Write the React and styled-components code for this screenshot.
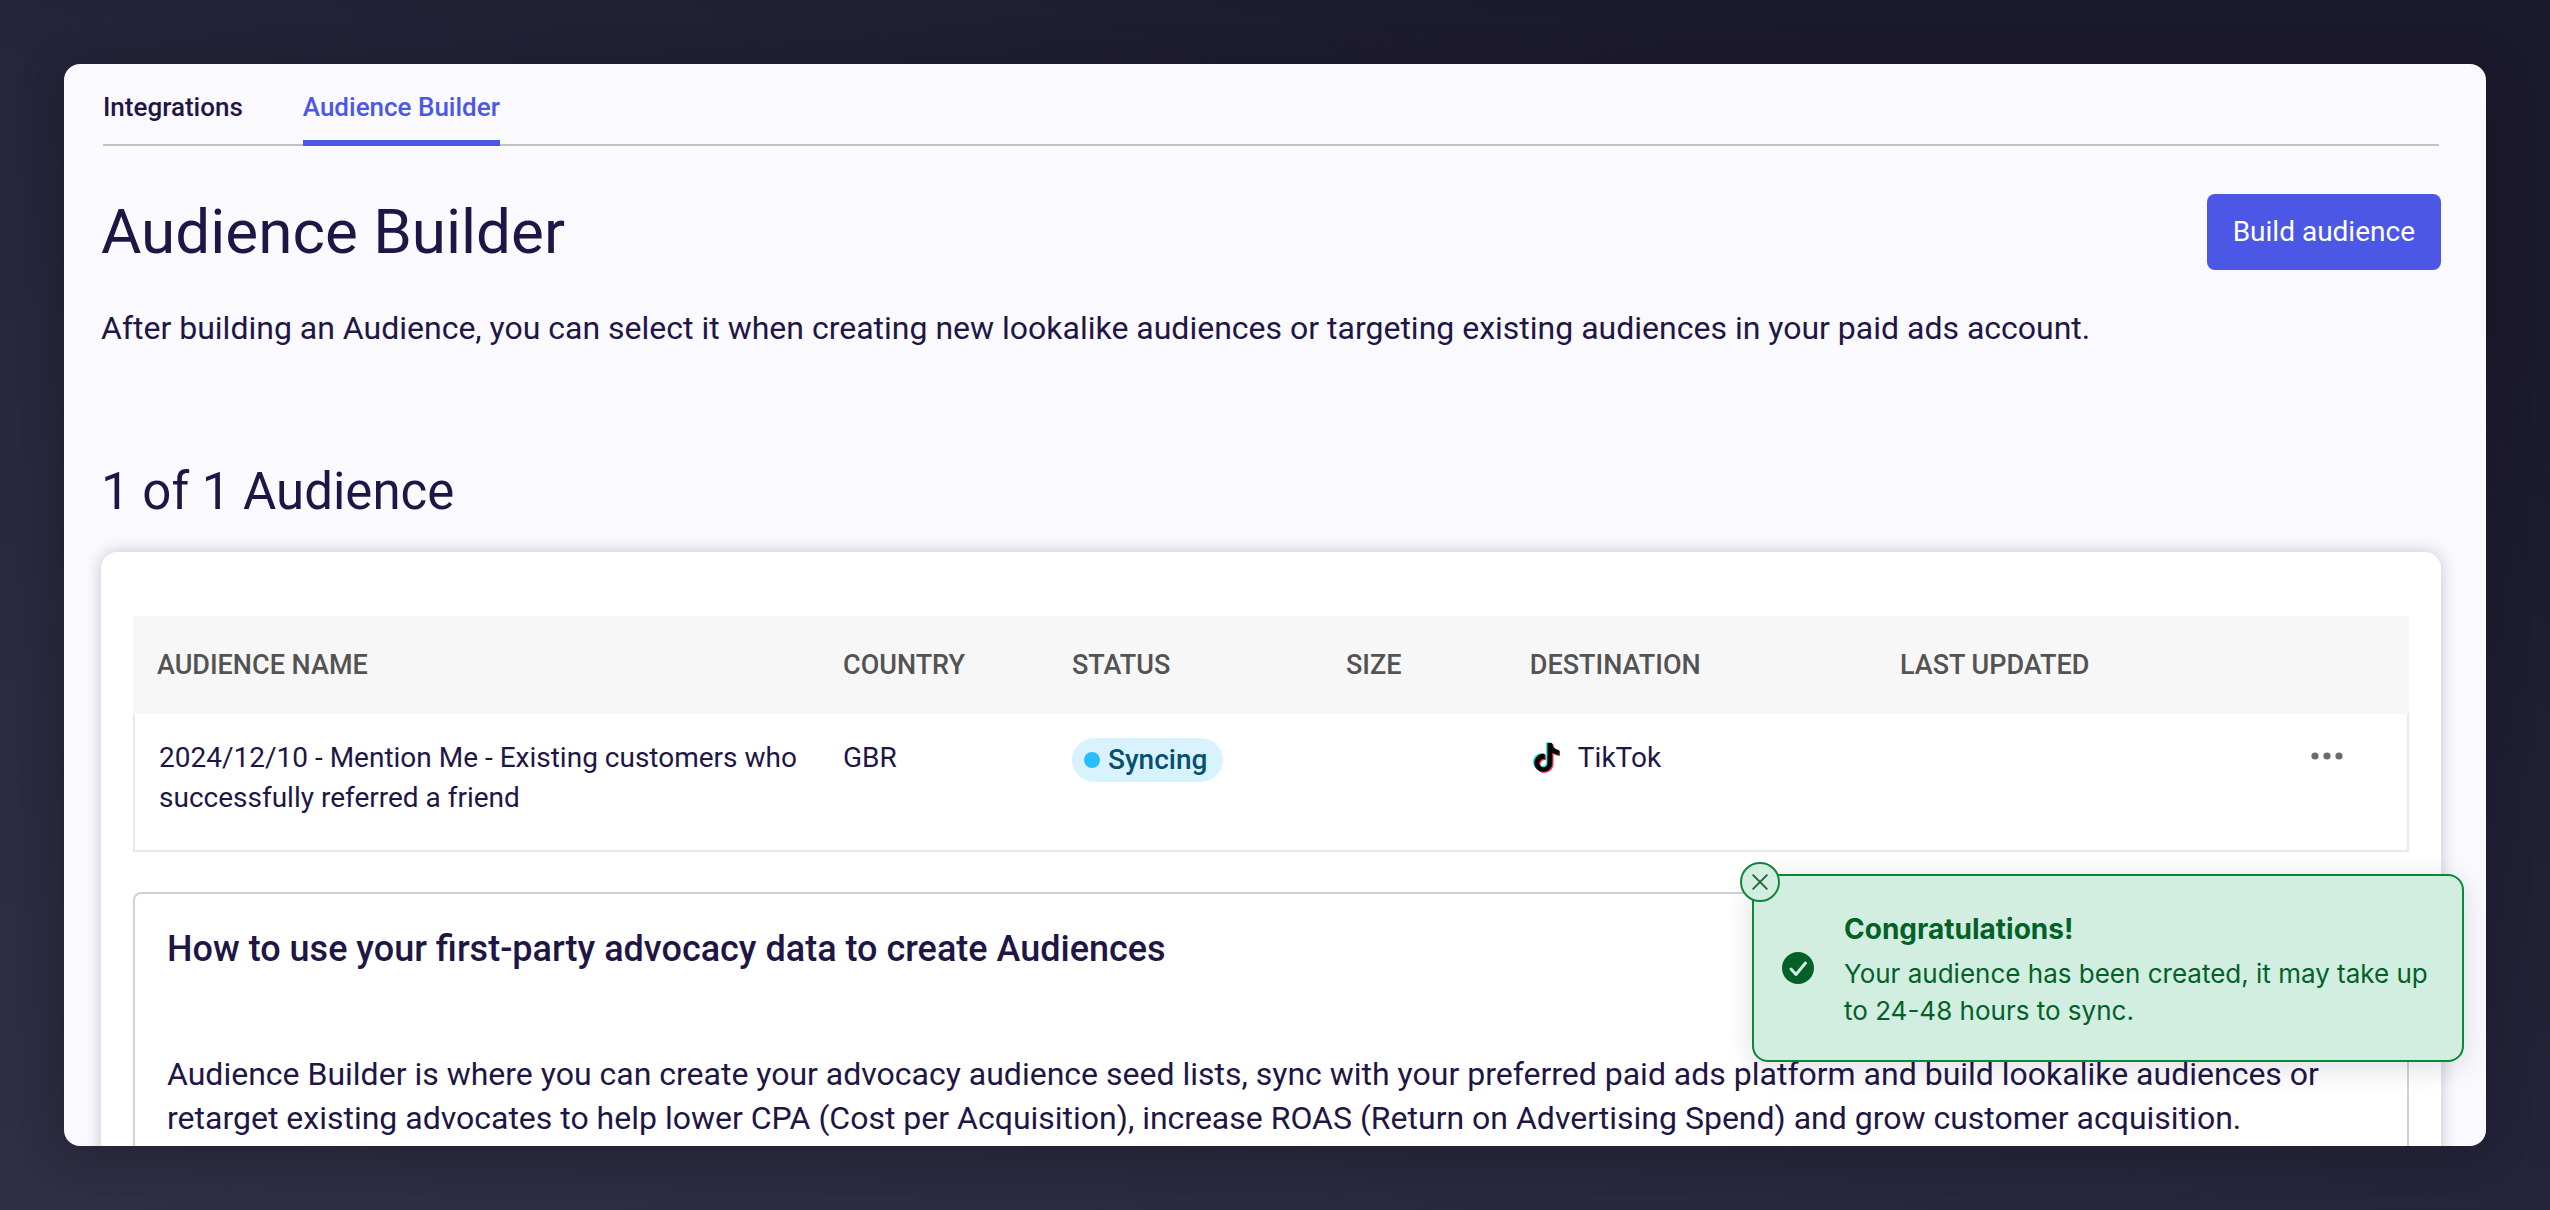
import React, { useState } from "react";
import styled, { createGlobalStyle } from "styled-components";

const GlobalStyle = createGlobalStyle`
  *, *::before, *::after { box-sizing: border-box; }
  body {
    margin: 0;
    font-family: Roboto, "Liberation Sans", sans-serif;
    color: #1f1646;
  }
  h1, h2, h3, p { margin: 0; font-weight: 400; }
  button { font: inherit; cursor: pointer; }
`;

const Stage = styled.div`
  display: flex;
  height: 100vh;
  padding: 64px;
  background: linear-gradient(25deg, #2e2e44 0%, #24243a 50%, #1b192c 85%);
`;

const Panel = styled.main`
  position: relative;
  flex: 1;
  overflow: hidden;
  padding: 0 45px 0 37px;
  border-radius: 16px;
  background: #f9f9fe;
  box-shadow: 0 4px 40px rgba(24, 18, 30, 0.45);
`;

const Tabs = styled.nav`
  display: flex;
  gap: 60px;
  margin: 0 2px;
  border-bottom: 2px solid #c2c2c4;
`;

const Tab = styled.a`
  margin-bottom: -2px;
  padding: 24px 0 14px;
  border-bottom: 6px solid ${(p) => (p.$active ? "#4c57e8" : "transparent")};
  color: ${(p) => (p.$active ? "#4c57e8" : "#1f1646")};
  font-size: 26px;
  font-weight: 500;
  line-height: 38px;
  text-decoration: none;
`;

const Header = styled.header`
  display: flex;
  align-items: center;
  justify-content: space-between;
  margin-top: 48px;
`;

const Title = styled.h1`
  font-size: 62px;
  line-height: 76px;
`;

const PrimaryButton = styled.button`
  padding: 0 26px;
  border: 0;
  border-radius: 8px;
  background: #4c57e5;
  color: #fff;
  font-size: 28px;
  line-height: 76px;
`;

const Lead = styled.p`
  margin-top: 36px;
  font-size: 32px;
  line-height: 44px;
`;

const CountTitle = styled.h2`
  margin-top: 112px;
  font-size: 51px;
  line-height: 60px;
`;

const Card = styled.section`
  margin-top: 30px;
  padding: 64px 32px 48px;
  border-radius: 16px;
  background: #fff;
  box-shadow: 0 0 16px rgba(30, 30, 50, 0.24);
`;

const Table = styled.table`
  width: 100%;
  border-collapse: separate;
  border-spacing: 0;
  table-layout: fixed;
  text-align: left;
`;

const Col = styled.col`
  width: ${(p) => p.$share}%;
`;

const HeadCell = styled.th`
  height: 98px;
  padding: 0 0 0 24px;
  background: #f7f7f7;
  color: #535353;
  font-size: 27px;
  font-weight: 500;
  line-height: 40px;
  text-transform: uppercase;
`;

const Cell = styled.td`
  height: 138px;
  padding: 24px 0 32px 24px;
  border-bottom: 2px solid #e9e9ea;
  font-size: 28px;
  line-height: 40px;
  vertical-align: top;

  &:first-child { border-left: 2px solid #e9e9ea; }
  &:last-child { border-right: 2px solid #e9e9ea; }
`;

const Status = styled.span`
  display: inline-flex;
  align-items: center;
  gap: 8px;
  height: 44px;
  padding: 0 16px 0 12px;
  border-radius: 22px;
  background: #d9f3fe;
  color: #07506f;
  font-weight: 500;

  &::before {
    content: "";
    width: 16px;
    height: 16px;
    border-radius: 50%;
    background: #29bdfd;
  }
`;

const Destination = styled.span`
  display: flex;
  align-items: center;
  gap: 18px;

  svg { width: 30px; height: 34px; }
`;

const MenuButton = styled.button`
  display: block;
  margin-left: auto;
  margin-right: 64px;
  padding: 0;
  border: 0;
  background: none;
  line-height: 0;

  svg { width: 32px; height: 36px; fill: #6b6b6b; }
`;

const Guide = styled.section`
  margin-top: 40px;
  padding: 31px 32px 48px;
  border: 2px solid #d0cfdb;
  border-radius: 8px;
`;

const GuideTitle = styled.h3`
  font-size: 36px;
  font-weight: 500;
  line-height: 48px;
`;

const GuideText = styled.p`
  margin-top: 79px;
  font-size: 32px;
  line-height: 44px;
`;

const Toast = styled.aside`
  position: absolute;
  right: 22px;
  bottom: 84px;
  display: flex;
  align-items: center;
  gap: 30px;
  width: 712px;
  padding: 31px 28px;
  border: 2px solid #078a38;
  border-radius: 16px;
  background: #d1eee0;
  color: #036128;
  box-shadow: 0 6px 28px rgba(20, 20, 50, 0.14);
  font-family: Inter, "Liberation Sans", sans-serif;
`;

const ToastIcon = styled.svg`
  flex: none;
  width: 32px;
  height: 32px;
`;

const ToastTitle = styled.h2`
  margin-bottom: 4px;
  font-size: 28px;
  font-weight: 700;
  line-height: 44px;
`;

const ToastText = styled.p`
  font-size: 26px;
  line-height: 37px;
`;

const CloseButton = styled.button`
  position: absolute;
  top: -14px;
  left: -14px;
  display: grid;
  place-items: center;
  width: 40px;
  height: 40px;
  padding: 0;
  border: 2px solid #14853d;
  border-radius: 50%;
  background: #d1eee0;

  svg { width: 16px; height: 16px; stroke: #1d6338; stroke-width: 1.6; stroke-linecap: round; }
`;

const NOTE =
  "M12.525.02c1.31-.02 2.61-.01 3.91-.02.08 1.53.63 3.09 1.75 4.17 1.12 1.11 2.7 1.62 4.24 1.79v4.03c-1.44-.05-2.89-.35-4.2-.97-.57-.26-1.1-.59-1.62-.93-.01 2.92.01 5.84-.02 8.75-.08 1.4-.54 2.79-1.35 3.94-1.31 1.92-3.58 3.17-5.91 3.21-1.43.08-2.86-.31-4.08-1.03-2.02-1.19-3.44-3.37-3.65-5.71-.02-.5-.03-1-.01-1.49.18-1.9 1.12-3.72 2.58-4.96 1.66-1.44 3.98-2.13 6.15-1.72.02 1.48-.04 2.96-.04 4.44-.99-.32-2.15-.23-3.02.37-.63.41-1.11 1.04-1.36 1.75-.21.51-.15 1.07-.14 1.61.24 1.64 1.82 3.02 3.5 2.87 1.12-.01 2.19-.66 2.77-1.61.19-.33.4-.67.41-1.06.1-1.79.06-3.57.07-5.36.01-4.03-.01-8.05.02-12.07z";

function TikTokLogo() {
  return (
    <svg viewBox="-2 -1 25 27" aria-hidden="true">
      <path d={NOTE} fill="#2bf0ea" transform="translate(-1.1 -0.7)" />
      <path d={NOTE} fill="#fe2c55" transform="translate(1 0.9)" />
      <path d={NOTE} fill="#050505" />
    </svg>
  );
}

const COLUMNS = [
  { label: "Audience name", share: 30.14 },
  { label: "Country", share: 10.06 },
  { label: "Status", share: 12.04 },
  { label: "Size", share: 8.08 },
  { label: "Destination", share: 16.26 },
  { label: "Last updated", share: 13.42 },
  { label: "", share: 10 },
];

export default function App() {
  const [toastOpen, setToastOpen] = useState(true);

  return (
    <>
      <GlobalStyle />
      <Stage>
        <Panel>
          <Tabs>
            <Tab href="#integrations">Integrations</Tab>
            <Tab href="#audience-builder" $active aria-current="page">
              Audience Builder
            </Tab>
          </Tabs>

          <Header>
            <Title>Audience Builder</Title>
            <PrimaryButton type="button">Build audience</PrimaryButton>
          </Header>
          <Lead>
            After building an Audience, you can select it when creating new lookalike audiences or
            targeting existing audiences in your paid ads account.
          </Lead>

          <CountTitle>1 of 1 Audience</CountTitle>
          <Card>
            <Table>
              <colgroup>
                {COLUMNS.map((c) => (
                  <Col key={c.label} $share={c.share} />
                ))}
              </colgroup>
              <thead>
                <tr>
                  {COLUMNS.map((c) => (
                    <HeadCell key={c.label} scope="col">
                      {c.label}
                    </HeadCell>
                  ))}
                </tr>
              </thead>
              <tbody>
                <tr>
                  <Cell>
                    2024/12/10 - Mention Me - Existing customers who successfully referred a friend
                  </Cell>
                  <Cell>GBR</Cell>
                  <Cell>
                    <Status>Syncing</Status>
                  </Cell>
                  <Cell />
                  <Cell>
                    <Destination>
                      <TikTokLogo />
                      TikTok
                    </Destination>
                  </Cell>
                  <Cell />
                  <Cell>
                    <MenuButton type="button" aria-label="Audience actions">
                      <svg viewBox="0 0 32 36">
                        <circle cx="4" cy="18" r="3.6" />
                        <circle cx="16" cy="18" r="3.6" />
                        <circle cx="28" cy="18" r="3.6" />
                      </svg>
                    </MenuButton>
                  </Cell>
                </tr>
              </tbody>
            </Table>

            <Guide>
              <GuideTitle>How to use your first-party advocacy data to create Audiences</GuideTitle>
              <GuideText>
                Audience Builder is where you can create your advocacy audience seed lists, sync with
                your preferred paid ads platform and build lookalike audiences or retarget existing
                advocates to help lower CPA (Cost per Acquisition), increase ROAS (Return on
                Advertising Spend) and grow customer acquisition.
              </GuideText>
            </Guide>
          </Card>

          {toastOpen && (
            <Toast role="status">
              <CloseButton type="button" aria-label="Dismiss" onClick={() => setToastOpen(false)}>
                <svg viewBox="0 0 14 14">
                  <path d="M1 1l12 12M13 1L1 13" />
                </svg>
              </CloseButton>
              <ToastIcon viewBox="0 0 32 32" aria-hidden="true">
                <circle cx="16" cy="16" r="16" fill="#036128" />
                <path
                  d="M9 17l5 5.5L23.5 11"
                  fill="none"
                  stroke="#d1eee0"
                  strokeWidth="3"
                  strokeLinecap="round"
                  strokeLinejoin="round"
                />
              </ToastIcon>
              <div>
                <ToastTitle>Congratulations!</ToastTitle>
                <ToastText>
                  Your audience has been created, it may take up to 24-48 hours to sync.
                </ToastText>
              </div>
            </Toast>
          )}
        </Panel>
      </Stage>
    </>
  );
}
